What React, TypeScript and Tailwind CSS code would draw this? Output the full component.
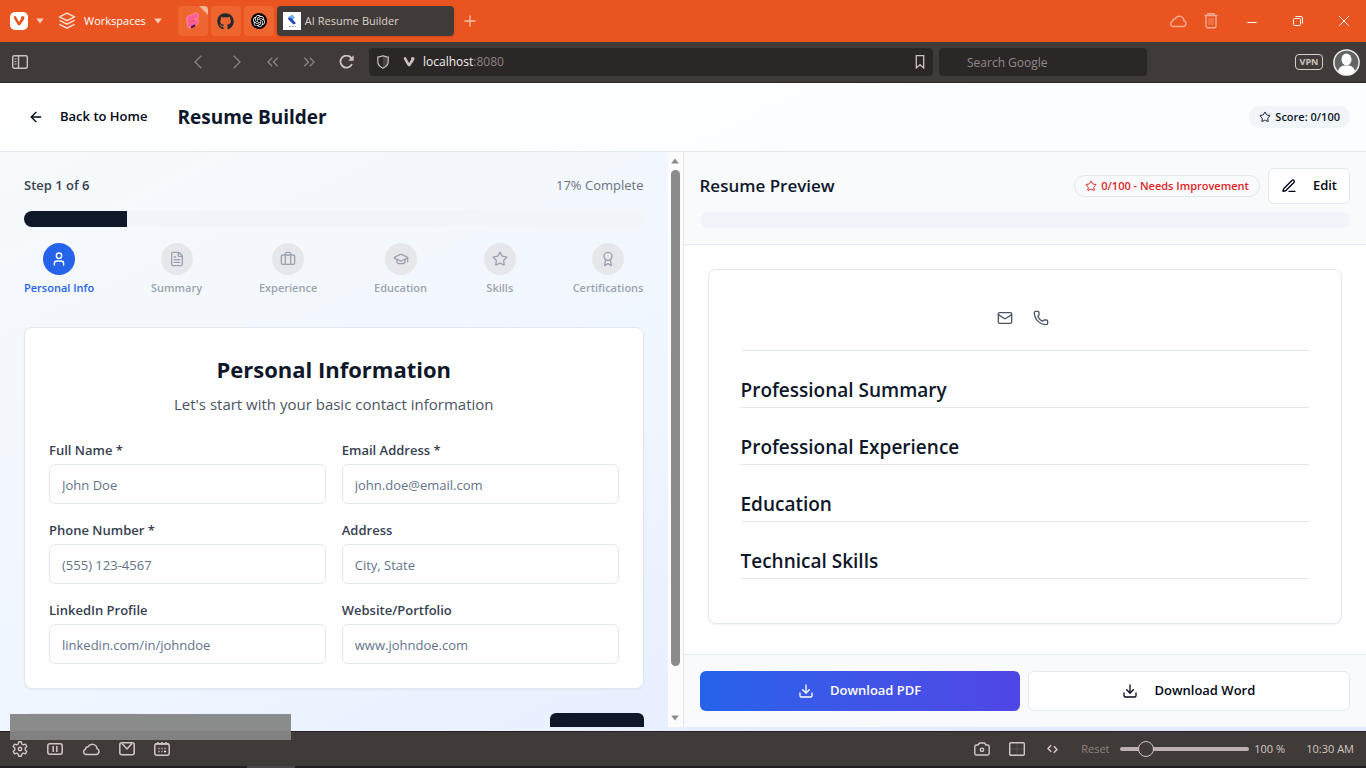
import React, { useState } from "react";
import {
  ArrowLeft, Star, User, FileText, Briefcase, GraduationCap, Award, Mail, Phone, Download,
} from "lucide-react";
import { SiOpenai } from "react-icons/si";
import { FaGithub } from "react-icons/fa";

function Caret({ className = "" }: { className?: string }) {
  return (
    <svg className={className} width="8" height="6" viewBox="0 0 8 6" fill="currentColor" aria-hidden="true">
      <path d="M.2.5h7.6L4 5.4z" />
    </svg>
  );
}

function VMark({ className = "" }: { className?: string }) {
  return (
    <svg className={className} width="12" height="12" viewBox="0 0 12 12" fill="none" aria-hidden="true">
      <path d="M2 2.4l3.5 6.3q.6 1 1.2 0L8.4 5.4" stroke="currentColor" strokeWidth="2.5" strokeLinecap="round" />
      <circle cx="9.7" cy="2.7" r="1.8" fill="currentColor" />
      <path d="M8.1 5.9q1-.7.4-2l2.6.1-1.8 3z" fill="currentColor" />
    </svg>
  );
}

function CloudIcon({ color }: { color: string }) {
  return (
    <svg width="18" height="14" viewBox="0 0 18 14" fill="none" stroke={color} strokeWidth="1.5" strokeLinejoin="round" aria-hidden="true">
      <path d="M3.6 12.4h10.6a3 3 0 0 0 .8-5.8A4.7 4.7 0 0 0 6.2 4.7 2.6 2.6 0 0 0 3.5 7.2a2.7 2.7 0 0 0 .1 5.2z" />
    </svg>
  );
}

function PenIcon() {
  return (
    <svg width="16" height="16" viewBox="0 0 24 24" fill="none" stroke="currentColor" strokeWidth="2" strokeLinecap="round" strokeLinejoin="round" aria-hidden="true">
      <path d="M12 20h9" />
      <path d="M16.376 3.622a1 1 0 0 1 3.002 3.002L7.368 18.635a2 2 0 0 1-.855.506l-2.872.838a.5.5 0 0 1-.62-.62l.838-2.872a2 2 0 0 1 .506-.854z" />
    </svg>
  );
}

function TitleBar() {
  return (
    <header className="flex h-[42px] shrink-0 items-center bg-[#e95420] text-white">
      <button aria-label="Vivaldi menu" className="ml-2.5 flex items-center gap-2">
        <span className="flex h-[18px] w-[18px] items-center justify-center rounded-[5px] bg-white text-[#e95420]"><VMark /></span>
        <Caret className="text-[#f8cdbd]" />
      </button>
      <button className="ml-3.5 flex items-center gap-2 text-[11px]">
        <svg width="18" height="18" viewBox="0 0 18 18" fill="none" stroke="#fbe0d6" strokeWidth="1.5" strokeLinejoin="round" aria-hidden="true">
          <path d="M9 1.2l7.6 3.7L9 8.6 1.4 4.9zM1.4 8.4L9 12.1l7.6-3.7M1.4 12.4L9 16.1l7.6-3.7" />
        </svg>
        Workspaces
        <Caret className="text-[#f8cdbd]" />
      </button>
      <nav aria-label="Tabs" className="ml-4 flex items-center gap-[3px]">
        <button aria-label="Pinned design tab" className="relative flex h-[30px] w-[30px] items-center justify-center overflow-hidden rounded bg-[#ee652f]">
          <svg width="16" height="18" viewBox="0 0 16 18" aria-hidden="true">
            <path d="M1.5 6.2Q1.5 5 2.6 4.4L11 .9q1.3-.4 1.7.8l.8 2.6q.2 1.1-.8 1.6L9 7.6l3.3-.2q1.200.1 1.200 1.300l-.3 2.200q-.2 1-1.100 1.400L4.500 16q-1.300.4-1.600-.8z" fill="#ff5c9a" stroke="#ffa3ae" strokeWidth=".7" />
            <path d="M6 14.200l4.500-2.100-.7 2.700-3 1.500q-1 .2-.8-2.100z" fill="#4a1560" />
            <path d="M4.500 10.400l5.600-2.500" stroke="#f0563f" />
          </svg>
          <svg className="absolute right-0 top-0" width="9" height="9" viewBox="0 0 9 9" aria-hidden="true"><path d="M0 0h9v9z" fill="#f7b59b" /></svg>
        </button>
        <button aria-label="GitHub" className="flex h-[30px] w-[30px] items-center justify-center rounded bg-[#ee652f] text-[#24292f]"><FaGithub size={17} /></button>
        <button aria-label="ChatGPT" className="flex h-[30px] w-[30px] items-center justify-center rounded bg-[#ee652f]">
          <span className="flex h-4 w-4 items-center justify-center rounded-full bg-black"><SiOpenai size={12} /></span>
        </button>
        <button className="flex h-[30px] w-[177px] items-center gap-1 rounded bg-[#403b38] pl-1.5 text-[11px] text-[#ddd2ce] shadow">
          <svg width="18" height="18" viewBox="0 0 18 18" aria-hidden="true">
            <path fill="#fff" d="M0 0h18v18H0z" />
            <path d="M5.5 5L9 2.5l3 3.5-3 2z" fill="#69b4ec" />
            <path d="M5 5.2l3.5 1 4.5 5-2.500 1.300-5-5z" fill="#2145b8" />
            <path d="M6 14.5h7" stroke="#9b9ba4" strokeDasharray="2 1" />
          </svg>
          AI Resume Builder
        </button>
      </nav>
      <button aria-label="New tab" className="ml-2.5">
        <svg width="12" height="12" viewBox="0 0 12 12" stroke="#f7bfa9" strokeWidth="1.4" aria-hidden="true"><path d="M6 .5v11M.5 6h11" /></svg>
      </button>
      <div className="ml-auto flex items-center">
        <button aria-label="Sync" className="mr-[17px]"><CloudIcon color="#f6aa8f" /></button>
        <button aria-label="Closed tabs" className="mr-[11px]">
          <svg width="14" height="16" viewBox="0 0 14 16" fill="none" aria-hidden="true">
            <path d="M.5 2.5h13M4 2V.8h6V2M2 3v10.2q0 1.5 1.5 1.5h7q1.5 0 1.5-1.500V3" stroke="#f6aa8f" strokeWidth="1.4" />
            <path d="M5 5v7M7 5v7M9 5v7" stroke="#f28c67" />
          </svg>
        </button>
        <button aria-label="Minimize" className="flex w-[46px] justify-center"><svg width="10" height="10" viewBox="0 0 10 10" stroke="#fff"><path d="M0 6.5h10" /></svg></button>
        <button aria-label="Restore" className="flex w-[46px] justify-center"><svg width="10" height="10" viewBox="0 0 10 10" fill="none" stroke="#fff"><rect x=".5" y="2.5" width="7" height="7" rx="1" /><path d="M2.5.5H8q1.5 0 1.5 1.5v5.500" /></svg></button>
        <button aria-label="Close" className="flex w-[45px] justify-center"><svg width="10" height="10" viewBox="0 0 10 10" stroke="#fff"><path d="M.2.2l9.6 9.6M9.8.2L.2 9.8" /></svg></button>
      </div>
    </header>
  );
}

function AddressBar() {
  return (
    <div className="flex h-[41px] shrink-0 items-center border-b border-[#2b2627] bg-[#403b38] text-[#cfc3c0]">
      <button aria-label="Show panel" className="ml-3">
        <svg width="16" height="14" viewBox="0 0 16 14" fill="none" stroke="currentColor" strokeWidth="1.4" aria-hidden="true"><rect x=".7" y=".7" width="14.6" height="12.6" rx="1.5" /><path d="M6.5 1v12" /><path d="M2.5 4h2M2.5 6.5h2M2.5 9h2" strokeWidth="1" /></svg>
      </button>
      <div className="ml-[166px] flex items-center text-[#8e8582]">
        <button aria-label="Back"><svg width="8" height="14" viewBox="0 0 8 14" fill="none" stroke="currentColor" strokeWidth="1.3"><path d="M7.3.7L1 7l6.3 6.3" /></svg></button>
        <button aria-label="Forward" className="ml-[31px]"><svg width="8" height="14" viewBox="0 0 8 14" fill="none" stroke="currentColor" strokeWidth="1.3"><path d="M.7.7L7 7 .7 13.3" /></svg></button>
        <button aria-label="Rewind" className="ml-[26px]"><svg width="12" height="10" viewBox="0 0 12 10" fill="none" stroke="currentColor" strokeWidth="1.3"><path d="M5.2.8L1 5l4.2 4.2M10.7.8L6.5 5l4.2 4.2" /></svg></button>
        <button aria-label="Fast forward" className="ml-6"><svg width="12" height="10" viewBox="0 0 12 10" fill="none" stroke="currentColor" strokeWidth="1.3"><path d="M1.3.8L5.5 5 1.3 9.2M6.8.8L11 5 6.8 9.2" /></svg></button>
      </div>
      <button aria-label="Reload" className="ml-6"><svg width="15" height="14" viewBox="0 0 15 14" fill="none" aria-hidden="true"><path d="M12.4 3.2A6 6 0 1 0 13 9" stroke="currentColor" strokeWidth="1.9" /><path d="M14.7.3v5.5H9.2z" fill="currentColor" /></svg></button>
      <div className="ml-[15px] flex h-7 min-w-0 grow items-center rounded bg-[#2c2727] px-2">
        <svg width="12" height="14" viewBox="0 0 12 14" fill="none" aria-hidden="true"><path d="M6 1v12c3.5-1.7 5.2-3.8 5.2-10.7Q8.8 2 6 .8z" fill="#4a4545" /><path d="M6 .8Q3.2 2 .8 2v4.6Q.8 11 6 13.2q5.2-2.2 5.2-6.6V2Q8.8 2 6 .8z" stroke="currentColor" strokeWidth="1.2" /></svg>
        <VMark className="ml-3.5" />
        <div className="ml-2 text-[12px] text-[#8e8582]"><span className="text-[#f3efee]">localhost</span>:8080</div>
        <button aria-label="Bookmark" className="ml-auto"><svg width="10" height="14" viewBox="0 0 10 14" fill="none" stroke="currentColor" strokeWidth="1.3"><path d="M1.3.7h7.4v12.2L5 9.7l-3.7 3.2z" /></svg></button>
      </div>
      <input aria-label="Search" placeholder="Search Google" className="ml-1.5 h-7 w-[208px] rounded bg-[#2c2727] pl-7 text-[12px] outline-none placeholder:text-[#91898a]" />
      <button className="ml-[148px] h-4 w-7 rounded border border-[#d8cfcd] text-[9px] font-bold leading-[14px]">VPN</button>
      <button aria-label="Profile" className="ml-2.5 mr-1.5">
        <svg width="27" height="27" viewBox="0 0 27 27" aria-hidden="true">
          <circle cx="13.5" cy="13.5" r="12.6" fill="#636464" stroke="#eee" strokeWidth="1.5" />
          <ellipse cx="13.5" cy="10.5" rx="5" ry="6" fill="#fff" /><path d="M5 22q1.5-5 6-5.5h5q4.5.5 6 5.5-3.5 4-8.5 4T5 22z" fill="#fff" />
        </svg>
      </button>
    </div>
  );
}

const steps = [
  { label: "Personal Info", Icon: User },
  { label: "Summary", Icon: FileText },
  { label: "Experience", Icon: Briefcase },
  { label: "Education", Icon: GraduationCap },
  { label: "Skills", Icon: Star },
  { label: "Certifications", Icon: Award },
];

const fields = [
  { id: "name", label: "Full Name *", hint: "John Doe" },
  { id: "email", label: "Email Address *", hint: "john.doe@email.com" },
  { id: "phone", label: "Phone Number *", hint: "(555) 123-4567" },
  { id: "address", label: "Address", hint: "City, State" },
  { id: "linkedin", label: "LinkedIn Profile", hint: "linkedin.com/in/johndoe" },
  { id: "website", label: "Website/Portfolio", hint: "www.johndoe.com" },
];

function FormPanel() {
  return (
    <section className="flex min-h-0 flex-1">
      <div className="min-w-0 flex-1 overflow-hidden px-6 pt-6">
        <div className="flex h-5 items-center justify-between text-[13px]">
          <span className="font-semibold text-[#374151]">Step 1 of 6</span>
          <span className="text-[#6b7280]">17% Complete</span>
        </div>
        <div className="mt-[15px] h-4 overflow-hidden rounded-full bg-slate-100"><div className="h-full w-1/6 bg-[#0f172a]" /></div>
        <ol className="mt-4 flex justify-between">
          {steps.map(({ label, Icon }, i) => (
            <li key={label} className={i === 0 ? "flex flex-col items-center text-[#2563eb]" : "flex flex-col items-center text-[#9ca3af]"}>
              <span className={i === 0 ? "flex h-8 w-8 items-center justify-center rounded-full bg-[#2563eb] text-white" : "flex h-8 w-8 items-center justify-center rounded-full bg-gray-200"}><Icon size={16} /></span>
              <span className="mt-1 text-[11px] font-semibold leading-[18px]">{label}</span>
            </li>
          ))}
        </ol>
        <div className="mt-[30px] rounded-lg border border-slate-200 bg-white p-6 shadow-xs">
          <h2 className="text-center text-[22px] font-bold leading-[34px] text-[#0f172a]">Personal Information</h2>
          <p className="mt-1.5 text-center text-[15px] leading-6 text-[#4b5563]">Let's start with your basic contact information</p>
          <form className="mt-6 grid grid-cols-2 gap-4">
            {fields.map((f) => (
              <div key={f.id}>
                <label htmlFor={f.id} className="block h-6 text-[13px] font-semibold leading-5 text-[#374151]">{f.label}</label>
                <input id={f.id} placeholder={f.hint} className="block h-10 w-full rounded-md border border-slate-200 bg-white px-3 pt-0.5 text-[13px] outline-none placeholder:text-[#64748b]" />
              </div>
            ))}
          </form>
        </div>
        <div className="mt-6 flex justify-between">
          <button disabled aria-label="Previous" className="h-10 w-[118px] rounded-md border border-slate-200 bg-white opacity-50" />
          <button aria-label="Next" className="h-10 w-[94px] rounded-md bg-[#0f172a]" />
        </div>
      </div>
      <div aria-hidden="true" className="flex w-[15px] shrink-0 flex-col items-center bg-[#fcfcfc] py-1.5 text-[#8b8b8b]">
        <Caret className="rotate-180" />
        <div className="my-1.5 flex grow flex-col"><div className="h-[92%] w-[9px] rounded-full bg-[#8b8b8b]" /></div>
        <Caret />
      </div>
    </section>
  );
}

const sections = ["Professional Summary", "Professional Experience", "Education", "Technical Skills"];

function PreviewPanel() {
  return (
    <section className="flex min-h-0 flex-1 flex-col border-l border-slate-200 bg-white">
      <div className="border-b border-slate-200 bg-slate-50 p-4">
        <div className="flex h-9 items-center">
          <h2 className="text-[17px] font-semibold text-[#0f172a]">Resume Preview</h2>
          <span className="ml-auto flex h-[22px] items-center gap-1 rounded-full border border-slate-200 px-2.5 text-[11px] font-semibold text-[#dc2626]"><Star size={12} />0/100 - Needs Improvement</span>
          <button className="ml-2 flex h-9 items-center gap-4 rounded-md border border-slate-200 bg-white px-3 text-[13px] font-semibold text-[#020817]"><PenIcon />Edit</button>
        </div>
        <div className="mt-2 h-4 rounded-full bg-slate-100" />
      </div>
      <div className="min-h-0 flex-1 overflow-hidden px-6 py-6">
        <article className="rounded-lg border border-slate-200 bg-white px-8 pb-11 pt-8 shadow-xs">
          <div className="flex h-[49px] justify-center gap-5 border-b border-slate-200 pr-1 pt-2 text-[#4b5563]"><Mail size={16} /><Phone size={16} /></div>
          {sections.map((s) => <h3 key={s} className="mt-6 h-[33px] border-b border-gray-200 text-[19px] font-semibold leading-[30px] text-[#0f172a]">{s}</h3>)}
        </article>
      </div>
      <div className="flex gap-2 border-t border-slate-200 bg-slate-50 p-4">
        <button className="flex h-10 flex-1 items-center justify-center gap-4 rounded-md bg-linear-to-r from-[#2563eb] to-[#4f46e5] text-[13px] font-semibold text-white"><Download size={16} />Download PDF</button>
        <button className="flex h-10 flex-1 items-center justify-center gap-4 rounded-md border border-slate-200 bg-white text-[13px] font-semibold text-[#020817]"><Download size={16} />Download Word</button>
      </div>
    </section>
  );
}

function StatusBar() {
  const [zoom, setZoom] = useState(16);
  return (
    <footer className="flex h-[37px] shrink-0 items-center border-b-2 border-t border-[#242021] bg-[#403b38] px-3 text-[11px] text-[#d3c7c5]">
      <div className="flex items-center gap-[19px]">
        <button aria-label="Settings"><svg width="16" height="16" viewBox="0 0 16 16" fill="none" stroke="currentColor" strokeWidth="1.4" strokeLinejoin="round"><path d="M6.7.8h2.6l.5 2.2 1.5.9 2.2-.7 1.3 2.3L13.2 7v2l1.6 1.5-1.3 2.3-2.2-.7-1.5.9-.5 2.2H6.7L6.2 13l-1.5-.9-2.2.7-1.3-2.3L2.8 9V7L1.2 5.5l1.3-2.3 2.2.7L6.2 3z" /><circle cx="8" cy="8" r="1.7" /></svg></button>
        <button aria-label="Break mode"><svg width="16" height="12" viewBox="0 0 16 12" fill="none" stroke="currentColor" strokeWidth="1.5"><rect x=".8" y=".8" width="14.4" height="10.4" rx="2" /><path d="M6.2 3v6M9.8 3v6" /></svg></button>
        <button aria-label="Sync status"><CloudIcon color="currentColor" /></button>
        <button aria-label="Mail"><svg width="16" height="14" viewBox="0 0 16 14" fill="none" stroke="currentColor" strokeWidth="1.5"><rect x=".8" y=".8" width="14.4" height="12" rx="2" /><path d="M3 1.5l5 5.5 5-5.5" /></svg></button>
        <button aria-label="Calendar"><svg width="16" height="14" viewBox="0 0 16 14" fill="none" stroke="currentColor" strokeWidth="1.5"><rect x=".8" y="1.8" width="14.4" height="11.4" rx="2" /><path d="M4 0v2M8 0v2M12 0v2M1 2h14" /><path d="M4 6.5h8M4 9.5h6" strokeDasharray="2 1" opacity=".6" /><path d="M10 9.5h2" stroke="#fff" /></svg></button>
      </div>
      <div className="ml-auto flex items-center">
        <button aria-label="Capture"><svg width="16" height="14" viewBox="0 0 16 14" fill="none" stroke="currentColor" strokeWidth="1.4"><path d="M2.5 3H4l1.5-2h5L12 3h1.5q1.7 0 1.7 1.7v6.6q0 1.7-1.7 1.7h-11Q.8 13 .8 11.3V4.7Q.8 3 2.5 3z" /><circle cx="8" cy="7.8" r="1.7" /></svg></button>
        <button aria-label="Tiling" className="ml-[19px]"><svg width="16" height="14" viewBox="0 0 16 14" fill="none" stroke="currentColor" strokeWidth="1.4"><rect x=".7" y=".7" width="14.6" height="12.6" rx="1" /><path d="M8 1.5v11M1.5 7h13" strokeWidth="1" opacity=".15" /></svg></button>
        <button aria-label="Page actions" className="ml-[22px]"><svg width="11" height="10" viewBox="0 0 11 10" fill="none" stroke="currentColor" strokeWidth="1.5"><path d="M4.2 1.2L1 4.5l3.2 3.3M6.8 2.2L10 5.5 6.8 8.8" /></svg></button>
        <button className="ml-[23px] w-7 text-left text-[#8e8582]">Reset</button>
        <input aria-label="Zoom" type="range" value={zoom} onChange={(e) => setZoom(Number(e.target.value))} className="ml-[11px] h-4 w-[129px] appearance-none bg-transparent [&::-webkit-slider-runnable-track]:h-1 [&::-webkit-slider-runnable-track]:rounded-full [&::-webkit-slider-runnable-track]:bg-[#bdb1af] [&::-webkit-slider-thumb]:-mt-1.5 [&::-webkit-slider-thumb]:h-4 [&::-webkit-slider-thumb]:w-4 [&::-webkit-slider-thumb]:appearance-none [&::-webkit-slider-thumb]:rounded-full [&::-webkit-slider-thumb]:border [&::-webkit-slider-thumb]:border-[#d3c7c5] [&::-webkit-slider-thumb]:bg-[#403b38]" />
        <span className="ml-[5px] w-[52px]">100 %</span>
        <time className="whitespace-nowrap">10:30 AM</time>
      </div>
    </footer>
  );
}

export default function App() {
  return (
    <div className="relative flex h-screen flex-col overflow-hidden font-['Open_Sans',sans-serif]">
      <TitleBar />
      <AddressBar />
      <main className="flex min-h-0 flex-1 flex-col bg-linear-to-br from-slate-50 via-blue-50 to-indigo-100 pb-1">
        <div className="flex h-[69px] shrink-0 items-center border-b border-slate-200 bg-white/80 px-4">
          <a href="#home" className="ml-3 flex items-center gap-4 text-[13px] font-semibold text-[#020817]"><ArrowLeft size={16} />Back to Home</a>
          <h1 className="ml-[30px] text-[19px] font-bold text-[#0f172a]">Resume Builder</h1>
          <span className="ml-auto flex h-[22px] items-center gap-1 rounded-full bg-slate-100 px-2.5 text-[11px] font-semibold text-[#0f172a]"><Star size={12} />Score: 0/100</span>
        </div>
        <div className="flex min-h-0 flex-1"><FormPanel /><PreviewPanel /></div>
      </main>
      <StatusBar />
      <div aria-hidden="true" className="absolute bottom-7 left-2.5 h-[26px] w-[281px] bg-[#858585]/95" />
      <div aria-hidden="true" className="absolute bottom-0 left-[247px] h-0.5 w-12 bg-[#4b4748]" />
    </div>
  );
}
